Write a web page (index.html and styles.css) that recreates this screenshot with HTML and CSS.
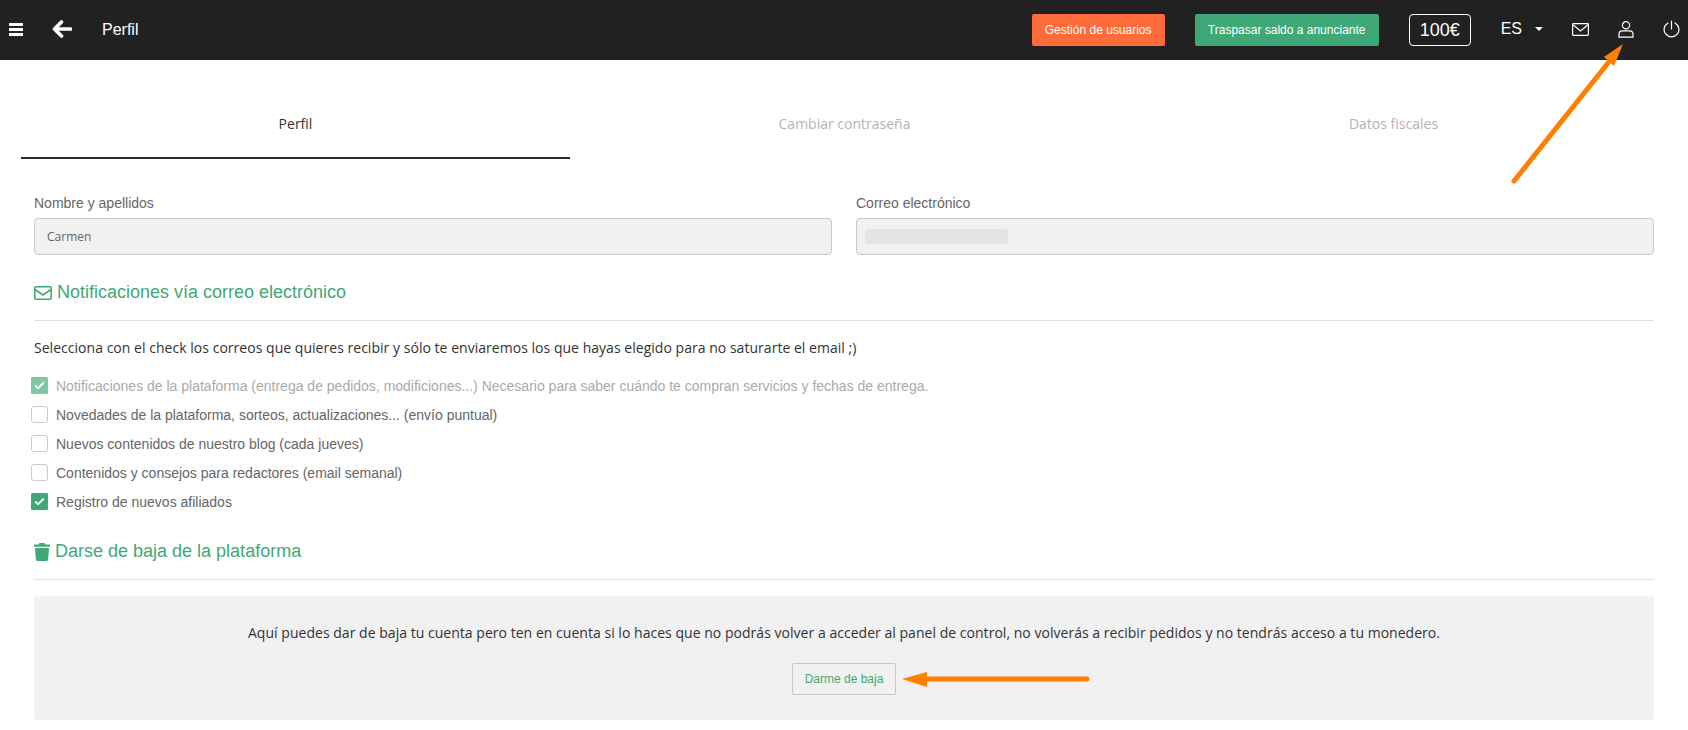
FILE: index.html
```html
<!DOCTYPE html>
<html>
<head>
  <title>Perfil</title>
  <link rel="stylesheet" href="styles.css">
</head>
<body>
  <header class="topbar">
    <svg class="icon-menu" width="14" height="13" viewBox="0 0 14 13"><path d="M0 0h14v3H0zM0 5h14v3H0zM0 10h14v3H0z" fill="#fff"/></svg>
    <svg class="icon-back" width="20" height="18" viewBox="0 0 20 18"><path d="M9.500 2 2.500 9l7 7M3.500 9H18.500" fill="none" stroke="#fff" stroke-width="3.600" stroke-linecap="round" stroke-linejoin="round"/></svg>
    <span class="page-title">Perfil</span>
    <div class="topbar-right">
      <a class="btn btn-orange">Gestión de usuarios</a>
      <a class="btn btn-green">Traspasar saldo a anunciante</a>
      <span class="balance">100€</span>
      <span class="lang">ES<i class="caret"></i></span>
      <svg class="icon-mail" width="17" height="13" viewBox="0 0 17 13"><rect x=".6" y=".6" width="15.800" height="11.800" rx=".8" fill="none" stroke="#fff" stroke-width="1.200"/><path d="M1 1.800 8.500 8 16 1.800" fill="none" stroke="#fff" stroke-width="1.200"/></svg>
      <svg class="icon-user" width="16" height="17" viewBox="0 0 16 17"><circle cx="8" cy="4.300" r="3.600" fill="none" stroke="#fff" stroke-width="1.200"/><path d="M1 16.200v-3C1 11 2.500 9.800 4.500 9.800h7c2 0 3.500 1.200 3.500 3.400v3z" fill="none" stroke="#fff" stroke-width="1.200"/></svg>
      <svg class="icon-power" width="17" height="18" viewBox="0 0 17 18"><path d="M5 3a7.400 7.400 0 1 0 7 0" fill="none" stroke="#fff" stroke-width="1.200" stroke-linecap="round"/><path d="M8.500 1v8" fill="none" stroke="#fff" stroke-width="1.200" stroke-linecap="round"/></svg>
    </div>
  </header>

  <nav class="tabs">
    <a class="tab active">Perfil</a>
    <a class="tab">Cambiar contraseña</a>
    <a class="tab">Datos fiscales</a>
  </nav>

  <main class="content">
    <div class="fields">
      <div class="field">
        <label>Nombre y apellidos</label>
        <div class="input">Carmen</div>
      </div>
      <div class="field">
        <label>Correo electrónico</label>
        <div class="input"><span class="blurred"></span></div>
      </div>
    </div>

    <h2 class="section-title">
      <svg width="18" height="14" viewBox="0 0 18 14"><rect x=".8" y=".8" width="16.400" height="12.400" rx="1.500" fill="none" stroke="#3fa877" stroke-width="1.600"/><path d="M1 3.500 9 9l8-5.500" fill="none" stroke="#3fa877" stroke-width="1.600"/></svg>
      Notificaciones vía correo electrónico
    </h2>
    <p class="intro">Selecciona con el check los correos que quieres recibir y sólo te enviaremos los que hayas elegido para no saturarte el email ;)</p>

    <ul class="checks">
      <li class="disabled"><span class="box on"><svg width="11" height="9" viewBox="0 0 11 9"><path d="M1.200 4.500 4 7.200 9.800 1.500" fill="none" stroke="#fff" stroke-width="1.800"/></svg></span>Notificaciones de la plataforma (entrega de pedidos, modificiones...) Necesario para saber cuándo te compran servicios y fechas de entrega.</li>
      <li><span class="box"></span>Novedades de la plataforma, sorteos, actualizaciones... (envío puntual)</li>
      <li><span class="box"></span>Nuevos contenidos de nuestro blog (cada jueves)</li>
      <li><span class="box"></span>Contenidos y consejos para redactores (email semanal)</li>
      <li><span class="box on"><svg width="11" height="9" viewBox="0 0 11 9"><path d="M1.200 4.500 4 7.200 9.800 1.500" fill="none" stroke="#fff" stroke-width="1.800"/></svg></span>Registro de nuevos afiliados</li>
    </ul>

    <h2 class="section-title section-delete">
      <svg width="16" height="18" viewBox="0 0 16 18"><path d="M5.500 0h5l.8 1.500H16v2.300H0V1.500h4.700zM1 5h14l-.9 11.500c-.1.900-.7 1.500-1.600 1.500h-9c-.9 0-1.500-.6-1.600-1.500z" fill="#3fa877"/></svg>
      Darse de baja de la plataforma
    </h2>

    <div class="unsubscribe">
      <p>Aquí puedes dar de baja tu cuenta pero ten en cuenta si lo haces que no podrás volver a acceder al panel de control, no volverás a recibir pedidos y no tendrás acceso a tu monedero.</p>
      <a class="btn-outline">Darme de baja</a>
    </div>
  </main>

  <svg class="arrows" width="1688" height="730" viewBox="0 0 1688 730">
    <path d="M1514 181 1612 58" stroke="#ff7f00" stroke-width="5" stroke-linecap="round"/>
    <path d="M1623 44 1614 66 1604 57z" fill="#ff7f00"/>
    <path d="M1087 679H925" stroke="#ff7f00" stroke-width="5" stroke-linecap="round"/>
    <path d="M902 679 927 672V687z" fill="#ff7f00"/>
  </svg>
</body>
</html>
```

FILE: styles.css
```css
body {
  font-family: "Liberation Sans", Arial, sans-serif;
  margin: 0;
  padding: 0;
  color: #555;
  background: #fff;
}
.topbar {
  display: flex;
  align-items: center;
  height: 60px;
  background: #212121;
  color: #fff;
  padding: 0 8px 0 9px;
}
.icon-back {
  margin-left: 29px;
  margin-top: -2px;
}
.icon-menu {
  margin-top: -1px;
}
.page-title {
  font-size: 16px;
  margin-left: 30px;
}
.topbar-right {
  display: flex;
  align-items: center;
  margin-left: auto;
}
.btn {
  display: flex;
  align-items: center;
  justify-content: center;
  height: 32px;
  border-radius: 2px;
  font-size: 12px;
  color: #fff;
}
.btn-orange {
  width: 133px;
  background: #ff6b3a;
}
.btn-green {
  width: 184px;
  margin-left: 30px;
  background: #3fa877;
}
.balance {
  display: flex;
  align-items: center;
  justify-content: center;
  box-sizing: border-box;
  width: 62px;
  height: 32px;
  margin-left: 30px;
  border: 1px solid #fff;
  border-radius: 4px;
  font-size: 18px;
}
.lang {
  display: flex;
  align-items: center;
  margin-left: 30px;
  margin-top: -2px;
  font-size: 16px;
}
.caret {
  width: 0;
  height: 0;
  margin-left: 13px;
  border-left: 4px solid transparent;
  border-right: 4px solid transparent;
  border-top: 4px solid #fff;
}
.icon-mail {
  margin-left: 29px;
  margin-top: -2px;
}
.icon-user {
  margin-left: 29px;
  margin-top: -2px;
}
.icon-power {
  margin-left: 29px;
  margin-top: -2px;
}
.tabs {
  display: flex;
  padding: 0 20px 0 21px;
}
.tab {
  flex: 1;
  height: 99px;
  box-sizing: border-box;
  padding-top: 54px;
  border-bottom: 2px solid transparent;
  font-family: "Open Sans", sans-serif;
  font-size: 14px;
  text-align: center;
  color: #b4b4b4;
}
.tab.active {
  color: #333;
  border-bottom-color: #2b2b2b;
}
.content {
  padding: 0 34px;
}
.fields {
  display: flex;
  gap: 24px;
  margin-top: 36px;
}
.field {
  flex: 1;
}
.field label {
  display: block;
  font-size: 14px;
  line-height: 17px;
  margin-bottom: 6px;
  color: #666;
}
.input {
  display: flex;
  align-items: center;
  box-sizing: border-box;
  height: 37px;
  padding: 0 13px 0 12px;
  background: #f1f1f1;
  border: 1px solid #c8c8c8;
  border-radius: 4px;
  font-family: "Open Sans", sans-serif;
  font-size: 12px;
  color: #666;
}
.blurred {
  width: 143px;
  height: 15px;
  margin-left: -4px;
  background: #e4e4e4;
  border-radius: 2px;
}
.section-title {
  display: flex;
  align-items: center;
  gap: 5px;
  margin: 17px 0 0;
  height: 41px;
  border-bottom: 1px solid #e2e2e2;
  padding-bottom: 7px;
  font-size: 18px;
  font-weight: normal;
  color: #3fa877;
}
.intro {
  margin: 17px 0 0;
  font-family: "Open Sans", sans-serif;
  font-size: 14px;
  line-height: 19px;
  letter-spacing: .03px;
  color: #333;
}
.checks {
  list-style: none;
  margin: 14px 0 0;
  padding: 0;
}
.checks li {
  display: flex;
  align-items: center;
  height: 29px;
  font-size: 14px;
  color: #666;
}
.checks li.disabled {
  color: #aaa;
}
.box {
  display: flex;
  align-items: center;
  justify-content: center;
  box-sizing: border-box;
  width: 17px;
  height: 17px;
  margin-left: -3px;
  margin-right: 8px;
  border: 1px solid #ccc;
  border-radius: 3px;
  background: #fff;
}
.box.on {
  background: #3fa877;
  border-color: #3fa877;
  border-radius: 1px;
}
.disabled .box {
  opacity: .65;
}
.section-delete {
  margin-top: 15px;
}
.unsubscribe {
  display: flex;
  flex-direction: column;
  align-items: center;
  box-sizing: border-box;
  height: 124px;
  margin-top: 16px;
  padding-top: 27px;
  background: #f1f1f1;
  border-radius: 4px;
}
.unsubscribe p {
  margin: 0;
  font-family: "Open Sans", sans-serif;
  font-size: 14px;
  line-height: 19px;
  letter-spacing: .03px;
  color: #333;
}
.btn-outline {
  display: flex;
  align-items: center;
  justify-content: center;
  box-sizing: border-box;
  width: 104px;
  height: 32px;
  margin-top: 21px;
  border: 1px solid #c8c8c8;
  border-radius: 2px;
  font-size: 12px;
  color: #3fa877;
}
.arrows {
  position: absolute;
  top: 0;
  left: 0;
  pointer-events: none;
}
```
